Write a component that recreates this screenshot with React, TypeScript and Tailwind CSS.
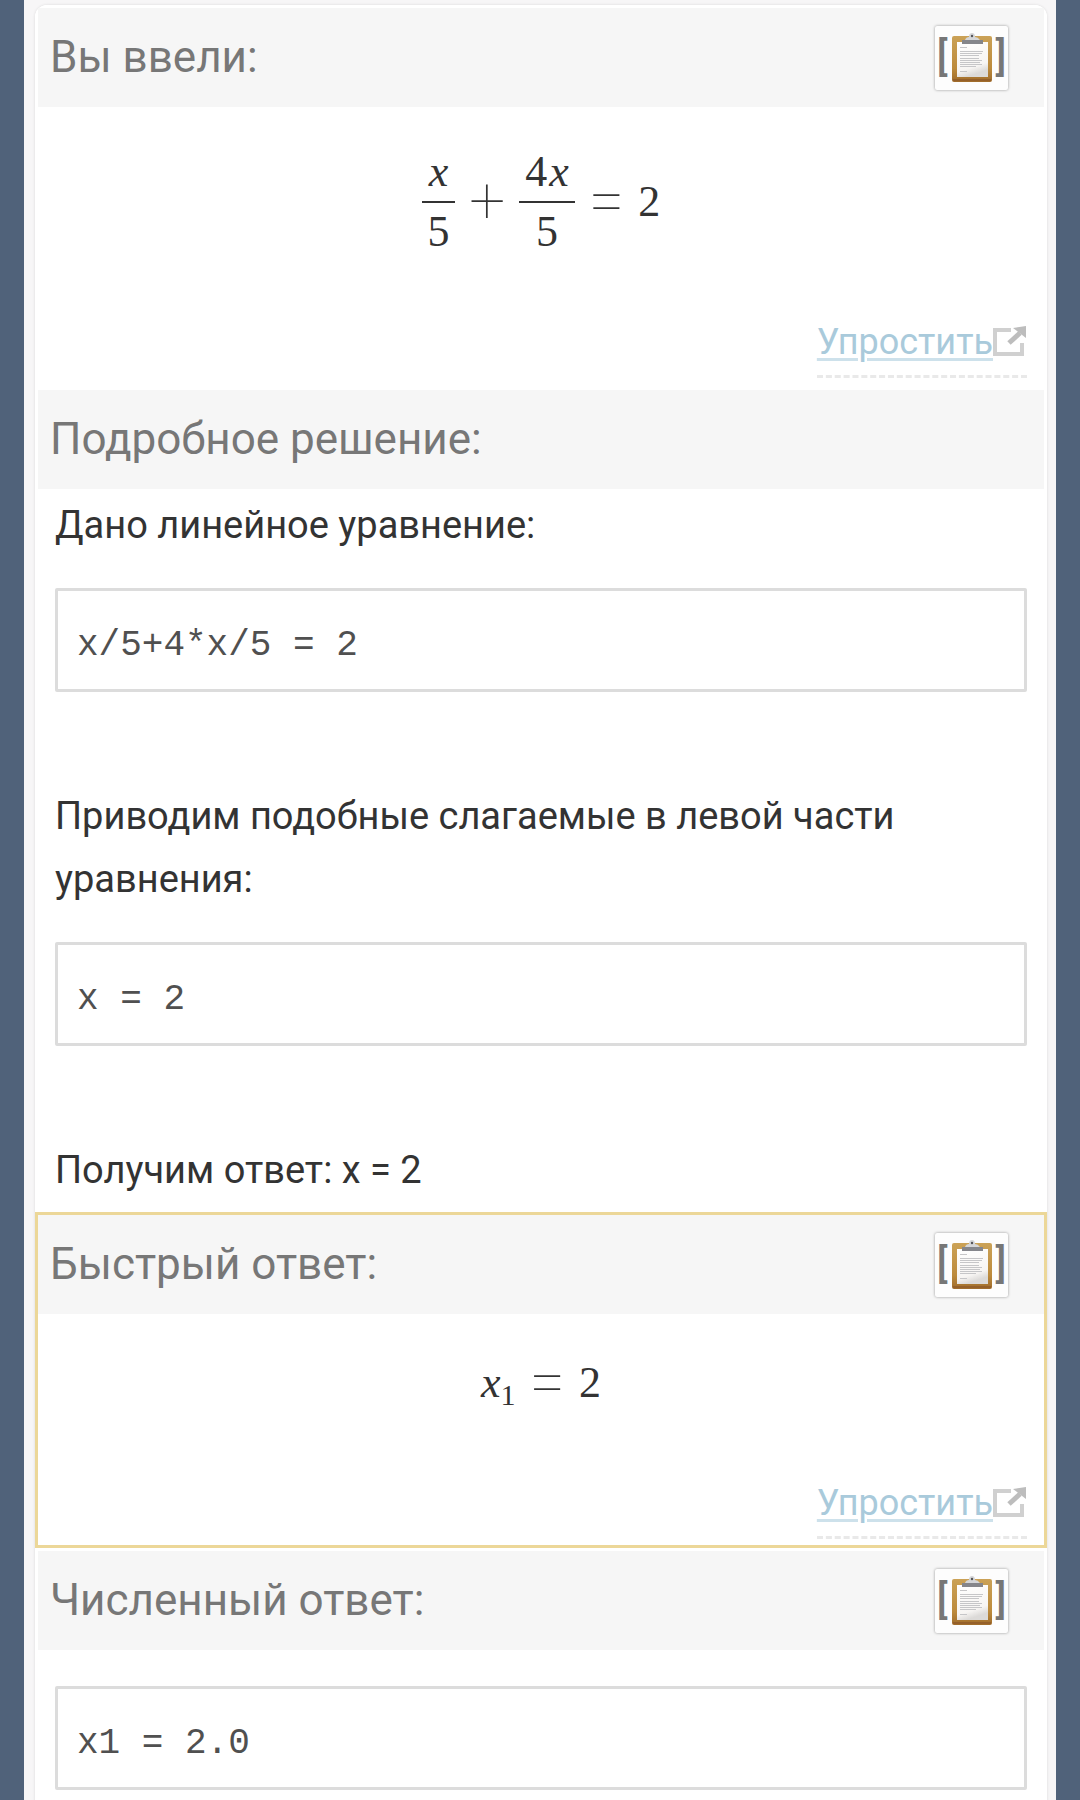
import type { ReactNode } from "react"
import clsx from "clsx"

function ClipboardIcon() {
  return (
    <svg viewBox="0 0 40 49" width="40" height="49" aria-hidden="true">
      <defs>
        <linearGradient id="wood" x1="0" y1="0" x2="0" y2="1">
          <stop offset="0" stopColor="#cba257" />
          <stop offset="0.7" stopColor="#bd8b3c" />
          <stop offset="1" stopColor="#a06c2b" />
        </linearGradient>
        <linearGradient id="sheet" x1="0" y1="0" x2="0.3" y2="1">
          <stop offset="0" stopColor="#ffffff" />
          <stop offset="0.8" stopColor="#f7f5f3" />
          <stop offset="1" stopColor="#dcdad8" />
        </linearGradient>
      </defs>
      <rect x="0" y="3" width="40" height="46" rx="2" fill="url(#wood)" />
      <rect x="1" y="46" width="38" height="2" fill="#95602a" />
      <path d="M5 9H36V44H5z" fill="url(#sheet)" />
      <path d="M10 7H31V11H10z" fill="#85868b" />
      <path d="M13 7Q14 4 17 4Q17 0 20 0Q23 0 23 4Q26 4 28 7z" fill="#d5d6d8" />
      <circle cx="20" cy="3" r="1.2" fill="#55565a" />
      <g stroke="#c6c6c8" strokeWidth="1">
        <path d="M8 14.5h7" />
        <path d="M8 18.5h23M8 20.5h22M8 22.5h19M8 25.5h19M8 27.5h22M8 29.5h20M8 31.5h22M8 33.5h16" />
        <path d="M8 38.5h7" />
      </g>
    </svg>
  )
}

function ExternalIcon() {
  return (
    <svg viewBox="0 0 34 31" width="34" height="31" className="mb-2 shrink-0" aria-hidden="true">
      <path d="M18 4H2V28H29V17" fill="none" stroke="#d0d0d0" strokeWidth="4" />
      <path d="M16 17L27 7" stroke="#bdbdbd" strokeWidth="5" />
      <path d="M20 2L33 0V12z" fill="#bdbdbd" />
    </svg>
  )
}

function CopyButton() {
  return (
    <button
      type="button"
      aria-label="Копировать"
      className="flex h-16 w-[73px] items-center justify-center gap-1 rounded-xs bg-[#fdfdfd] text-[40px] leading-10 font-medium text-[#777777] shadow-[0_0_3px_rgba(0,0,0,0.4)]"
    >
      <span>[</span>
      <ClipboardIcon />
      <span>]</span>
    </button>
  )
}

interface SectionProps {
  title: string
  copy?: boolean
  active?: boolean
  children: ReactNode
}

function Section({ title, copy, active, children }: SectionProps) {
  return (
    <section className={clsx("border-3", active ? "border-[#ecd798]" : "rounded-t-xl border-white")}>
      <header className="flex h-[99px] items-center justify-between bg-[#f6f6f6] pr-9 pl-3">
        <h2 className="pb-[2px] text-[44px] leading-[60px] text-[#777777]">{title}</h2>
        {copy && <CopyButton />}
      </header>
      {children}
    </section>
  )
}

function SimplifyLink() {
  return (
    <div className="flex justify-end px-[17px] pb-[6px]">
      <a href="#simplify" className="flex items-center border-b-3 border-dashed border-[#e9e9e9] text-[#a9cadb]">
        <span className="pb-[6px] text-4xl leading-[54px] underline decoration-[#cde1eb] decoration-3 underline-offset-4">
          Упростить
        </span>
        <ExternalIcon />
      </a>
    </div>
  )
}

function CodeBox({ children }: { children: string }) {
  return (
    <pre className="rounded-xs border-3 border-[#dcdcdc] px-[19px] pt-[30px] pb-[18px] font-['Liberation_Mono',monospace] text-4xl leading-[50px] text-[#505050]">
      {children}
    </pre>
  )
}

function Fraction({ top, bottom }: { top: ReactNode; bottom: ReactNode }) {
  return (
    <span className="flex flex-col text-center">
      <span className="border-b-2 border-[#333333] px-[6px] pb-2 leading-[42px]">{top}</span>
      <span className="pt-2 leading-[42px]">{bottom}</span>
    </span>
  )
}

function Op({ children }: { children: string }) {
  return <span className="font-[Roboto] text-[64px] leading-[42px] font-thin">{children}</span>
}

function Formula({ children }: { children: ReactNode }) {
  return (
    <div className="flex items-center justify-center gap-[14px] font-['Liberation_Serif',serif] text-[44px] leading-[42px] text-[#333333]">
      {children}
    </div>
  )
}

export default function App() {
  return (
    <div className="min-h-screen bg-[#50627a] px-6 font-[Roboto,sans-serif]">
      <main className="min-h-screen bg-[#f7f6f7] pt-[5px] pr-[9px] pl-[11px]">
        <div className="min-h-screen rounded-t-xl bg-white shadow-[0_0_3px_rgba(0,0,0,0.12)]">
          <Section title="Вы ввели:" copy>
            <div className="pt-11 pb-[62px]">
              <Formula>
                <Fraction top={<i className="px-[1px]">x</i>} bottom="5" />
                <Op>+</Op>
                <Fraction top={<>4<i className="pl-[2px]">x</i></>} bottom="5" />
                <Op>=</Op>
                <span>2</span>
              </Formula>
            </div>
            <SimplifyLink />
          </Section>

          <Section title="Подробное решение:">
            <div className="px-[17px] pt-[5px] pb-[7px] text-[38px] leading-[63px] text-[#333333]">
              <p className="mb-[31px]">Дано линейное уравнение:</p>
              <CodeBox>x/5+4*x/5 = 2</CodeBox>
              <p className="mt-[93px] mb-[31px]">Приводим подобные слагаемые в левой части уравнения:</p>
              <CodeBox>x = 2</CodeBox>
              <p className="mt-[93px]">Получим ответ: x = 2</p>
            </div>
          </Section>

          <Section title="Быстрый ответ:" copy active>
            <div className="pt-12 pb-[72px]">
              <Formula>
                <span>
                  <i>x</i>
                  <sub className="text-3xl leading-none">1</sub>
                </span>
                <Op>=</Op>
                <span>2</span>
              </Formula>
            </div>
            <SimplifyLink />
          </Section>

          <Section title="Численный ответ:" copy>
            <div className="px-[17px] pt-9">
              <CodeBox>x1 = 2.0</CodeBox>
            </div>
          </Section>
        </div>
      </main>
    </div>
  )
}
